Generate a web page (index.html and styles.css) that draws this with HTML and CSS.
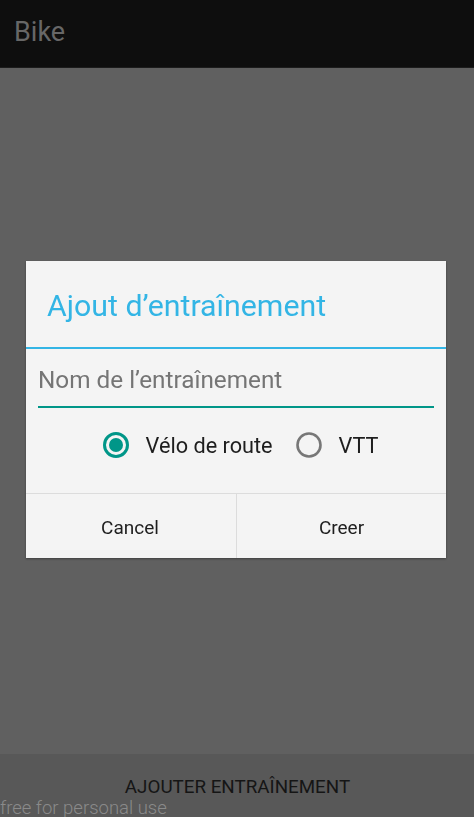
FILE: index.html
```html
<!DOCTYPE html>
<html lang="fr">
<head>
<meta charset="utf-8">
<title>Bike</title>
<link rel="stylesheet" href="styles.css">
</head>
<body>
<div class="app">
  <header class="actionbar"><span class="app-title">Bike</span></header>
  <main class="content"></main>
  <div class="bottom-btn">AJOUTER ENTRAÎNEMENT</div>
  <div class="watermark">free for personal use</div>
</div>
<div class="scrim">
  <div class="dialog">
    <div class="dlg-title">Ajout d’entraînement</div>
    <div class="dlg-sep"></div>
    <div class="dlg-body">
      <div class="field"><span class="hint">Nom de l’entraînement</span></div>
      <div class="radios">
        <div class="radio">
          <svg class="radio-icon" width="30" height="30" viewBox="0 0 30 30"><circle cx="15" cy="15" r="11.5" fill="none" stroke="#009688" stroke-width="3"/><circle cx="15" cy="15" r="7" fill="#009688"/></svg>
          <span class="radio-label">Vélo de route</span>
        </div>
        <div class="radio">
          <svg class="radio-icon" width="30" height="30" viewBox="0 0 30 30"><circle cx="15" cy="15" r="11.5" fill="none" stroke="#777" stroke-width="2.6"/></svg>
          <span class="radio-label">VTT</span>
        </div>
      </div>
    </div>
    <div class="dlg-buttons">
      <div class="dlg-btn">Cancel</div>
      <div class="dlg-btn">Creer</div>
    </div>
  </div>
</div>
</body>
</html>
```
FILE: styles.css
```css
html, body {
  margin: 0;
  padding: 0;
  height: 100%;
}
body {
  font-family: Roboto, "Noto Sans", sans-serif;
  background: #606060;
  overflow: hidden;
}
.app {
  display: flex;
  flex-direction: column;
  height: 817px;
  position: relative;
}
.actionbar {
  height: 68px;
  flex: none;
  background: #0e0e0e;
  display: flex;
  align-items: center;
  padding-left: 14px;
  border-bottom: 1px solid #1c1c1c;
  box-sizing: border-box;
}
.app-title {
  color: #676767;
  font-size: 27px;
  padding-bottom: 4px;
}
.content {
  flex: 1;
  background: #606060;
}
.bottom-btn {
  height: 63px;
  flex: none;
  background: #585858;
  color: #151515;
  font-size: 18.8px;
  display: flex;
  justify-content: center;
  align-items: center;
  padding-top: 3px;
  padding-left: 1px;
  box-sizing: border-box;
}
.watermark {
  position: absolute;
  left: 0;
  bottom: -2px;
  color: #8a8a8a;
  font-size: 18.5px;
  font-weight: 300;
}
.scrim {
  position: fixed;
  inset: 0;
  display: flex;
  align-items: center;
  justify-content: center;
  padding-right: 2px;
}
.dialog {
  width: 420px;
  height: 297px;
  background: #f4f4f4;
  box-shadow: 0 1px 2px rgba(0,0,0,0.35);
  display: flex;
  flex-direction: column;
  margin-top: 1px;
}
.dlg-title {
  height: 86px;
  box-sizing: border-box;
  color: #33b5e5;
  font-size: 30.3px;
  padding-left: 21px;
  display: flex;
  align-items: center;
  padding-top: 4px;
}
.dlg-sep {
  height: 2px;
  background: #33b5e5;
}
.dlg-body {
  flex: 1;
  padding: 0 12px;
  display: flex;
  flex-direction: column;
  border-bottom: 1px solid #dcdcdc;
}
.field {
  height: 59px;
  box-sizing: border-box;
  border-bottom: 2px solid #009688;
  display: flex;
  align-items: center;
  padding-left: 0;
  padding-top: 4px;
}
.hint {
  color: #757575;
  font-size: 24.3px;
}
.radios {
  flex: 1;
  display: flex;
  justify-content: center;
  align-items: center;
  gap: 21px;
  padding-bottom: 10px;
  padding-left: 7px;
}
.radio {
  display: flex;
  align-items: center;
  gap: 15px;
}
.radio-label {
  color: #1e1e1e;
  font-size: 21.7px;
}
.dlg-buttons {
  height: 64px;
  flex: none;
  display: grid;
  grid-template-columns: 210px 1fr;
}
.dlg-btn {
  display: flex;
  align-items: center;
  justify-content: center;
  color: #1e1e1e;
  font-size: 19px;
  padding-top: 4px;
}
.dlg-btn:first-child {
  padding-left: 0;
  padding-right: 2px;
}
.dlg-btn + .dlg-btn {
  border-left: 1px solid #dcdcdc;
}
```
